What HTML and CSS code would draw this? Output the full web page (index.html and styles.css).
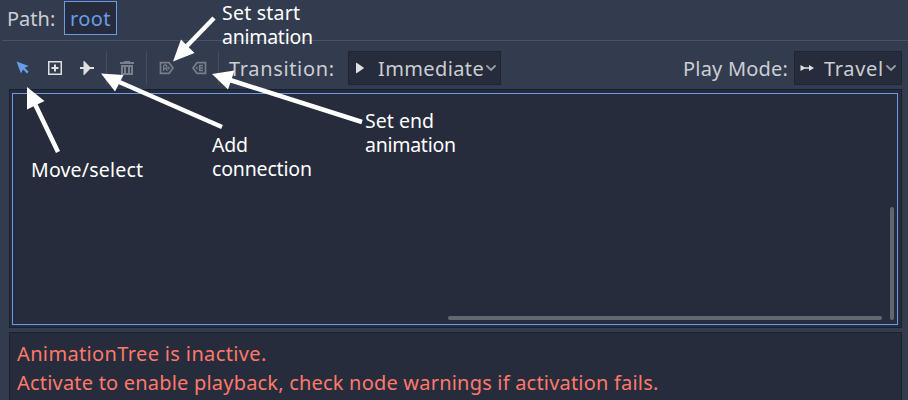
FILE: index.html
```html
<!DOCTYPE html>
<html lang="en">
<head>
<meta charset="utf-8">
<title>AnimationTree</title>
<link rel="stylesheet" href="styles.css">
</head>
<body>
<div class="editor">
  <header class="path-bar"><span class="path-label">Path:</span><span class="crumb">root</span></header>
  <nav class="toolbar">
    <span class="tool"><svg width="16" height="16" viewBox="0 0 16 16"><path fill="#699ce8" d="M1.500 1.500l4.500 12 2-4 4 4 1.700-1.700-4-4 4-1.800z"/></svg></span>
    <span class="tool"><svg width="16" height="16" viewBox="0 0 16 16"><path fill="#e0e0e0" fill-rule="evenodd" d="M1 1h14v14H1zM2.500 2.500v11h11v-11zM7 4.500h2V7h2.500v2H9v2.500H7V9H4.500V7H7z"/></svg></span>
    <span class="tool"><svg width="16" height="16" viewBox="0 0 16 16"><path fill="#e0e0e0" d="M4.500 1h.8l5.700 6h4v2h-4l-5.700 6h-.8V9H1V7h3.500z"/></svg></span>
    <i class="sep"></i>
    <span class="tool"><svg width="16" height="16" viewBox="0 0 16 16"><path fill="#797e8a" fill-rule="evenodd" d="M5 1h6v1h4v2H1V2h4zM2 5h12v10H2zM4 7v6h1V7zm3 0v6h2V7zm4 0v6h1V7z"/></svg></span>
    <i class="sep"></i>
    <span class="tool"><svg width="16" height="16" viewBox="0 0 16 16"><path fill="none" stroke="#797e8a" stroke-width="1.700" d="M1.500 2.700h8.500L14 8l-4 5.300H1.500z"/><path fill="none" stroke="#797e8a" stroke-width="1.300" d="M4.600 11V6l1-1h1.200l1 1v5M4.500 8.500H8"/><path fill="#797e8a" d="M9.200 6v4l2-2z"/></svg></span>
    <span class="tool"><svg width="16" height="16" viewBox="0 0 16 16"><path fill="none" stroke="#797e8a" stroke-width="1.700" d="M14.500 2.700H6L2 8l4 5.300h8.500z"/><path fill="none" stroke="#797e8a" stroke-width="1.400" d="M12 5.500H8.600v5H12M8.500 8H12"/><path fill="#797e8a" d="M6.500 6v4l-2-2z"/></svg></span>
    <i class="sep"></i>
    <span class="label transition">Transition:</span>
    <span class="select immediate"><svg class="mode" width="16" height="16" viewBox="0 0 16 16"><path fill="#e0e0e0" d="M4 3.500q0-1 1-.5l6.500 4.500q.8.500 0 1L5 13q-1 .5-1-.5z"/></svg><span class="value">Immediate</span><svg class="chevron" width="12" height="12" viewBox="0 0 12 12"><path d="M2 4l4 4 4-4"/></svg></span>
    <span class="grow"></span>
    <span class="label play">Play Mode:</span>
    <span class="select travel"><svg class="mode" width="16" height="16" viewBox="0 0 16 16"><path fill="#e0e0e0" d="M1.500 5l4 2.300h4.500V5l5 3-5 3V8.700H5.500l-4 2.300z"/></svg><span class="value">Travel</span><svg class="chevron" width="12" height="12" viewBox="0 0 12 12"><path d="M2 4l4 4 4-4"/></svg></span>
  </nav>
  <main class="graph"><div class="graph-view"><i class="scroll-v"></i><i class="scroll-h"></i></div></main>
  <section class="warning"><p class="line-one">AnimationTree is inactive.</p><p class="line-two">Activate to enable playback, check node warnings if activation fails.</p></section>
</div>
<svg class="notes" width="908" height="400" viewBox="0 0 908 400">
  <g class="shafts">
    <path d="M214 18L184 49M58 152L35 104M222 127L117 81M362 122L230 80"/>
  </g>
  <g class="heads">
    <path d="M173 61.500l8-22 13.500 13.500zM27 87l17.500 14-17.500 8.500zM101 73.500l22.500 1.500-8.500 16.500zM212 74l22.500-3.500-6.500 19z"/>
  </g>
  <g class="captions">
    <text x="222" y="20" textLength="78">Set start</text>
    <text x="222" y="44" textLength="91">animation</text>
    <text x="31" y="177" textLength="112">Move/select</text>
    <text x="212" y="152" textLength="36">Add</text>
    <text x="212" y="176" textLength="100">connection</text>
    <text x="365" y="128" textLength="69">Set end</text>
    <text x="365" y="152" textLength="91">animation</text>
  </g>
</svg>
</body>
</html>
```
FILE: styles.css
```css
* { box-sizing: border-box; }
body { margin: 0; overflow: hidden; background: #333b4f; font: 20px/28px "Noto Sans", sans-serif; color: #cbced3; }
.editor { height: 400px; display: flex; flex-direction: column; }
.path-bar { height: 41px; margin-left: 2px; padding: 1px 0 5px 5px; display: flex; border-bottom: 1px solid #4b5263; }
.path-label { width: 57px; line-height: 35px; }
.crumb { width: 53px; height: 34px; padding-left: 5px; border: 1px solid #699ce8; background: #262c3b; color: #699ce8; line-height: 34px; letter-spacing: .4px; }
.toolbar { height: 48px; padding: 10px 6px 4px 7px; display: flex; }
.tool { width: 32px; display: flex; align-items: center; justify-content: center; }
.sep { width: 8px; border-left: 1px solid #464d5e; margin-left: 3px; margin-right: -3px; }
.label { line-height: 35px; white-space: nowrap; }
.transition { width: 119px; margin-left: 6px; letter-spacing: .65px; }
.play { width: 111px; letter-spacing: .2px; }
.select { height: 34px; background: #262c3b; border: 1px solid #1f2532; display: flex; align-items: center; white-space: nowrap; }
.immediate { width: 153px; padding-left: 3px; }
.travel { width: 108px; padding-left: 4px; }
.value { line-height: 32px; padding-top: 2px; }
.immediate .value { width: 107px; margin-left: 10px; letter-spacing: .38px; }
.travel .value { width: 61px; margin-left: 9px; letter-spacing: .65px; }
.mode, .chevron { flex: none; }
.chevron path { fill: none; stroke: #9599a2; stroke-width: 1.9; stroke-linecap: round; }
.grow { flex: 1; }
.graph { height: 239px; margin: 0 6px 0 9px; padding: 3px 3px 2px 2px; background: #262c3b; border: 1px solid #1a202c; }
.graph-view { height: 232px; border: 1px solid #699ce8; display: grid; grid-template: 1fr 4px / 1fr 4px; padding: 0 3px 4px 0; }
.scroll-v { grid-area: 1 / 2 / 3 / 3; height: 113px; align-self: end; background: #636770; border-radius: 2px; }
.scroll-h { grid-area: 2 / 1; width: 434px; justify-self: end; margin-right: 8px; background: #636770; border-radius: 2px; }
.warning { flex: 1; margin: 4px 6px 0 9px; padding: 7px; background: #262c3b; border: 1px solid #1a202c; border-bottom: 0; color: #ff786b; white-space: nowrap; }
.warning p { margin: 0; height: 29px; line-height: 28px; }
.line-one { letter-spacing: .36px; }
.line-two { letter-spacing: .2px; }
.notes { position: absolute; inset: 0; }
.shafts { fill: none; stroke: #fff; stroke-width: 4.5; }
.heads { fill: #fff; }
.captions { fill: #fff; font: 19.5px "Noto Sans", sans-serif; }
```
